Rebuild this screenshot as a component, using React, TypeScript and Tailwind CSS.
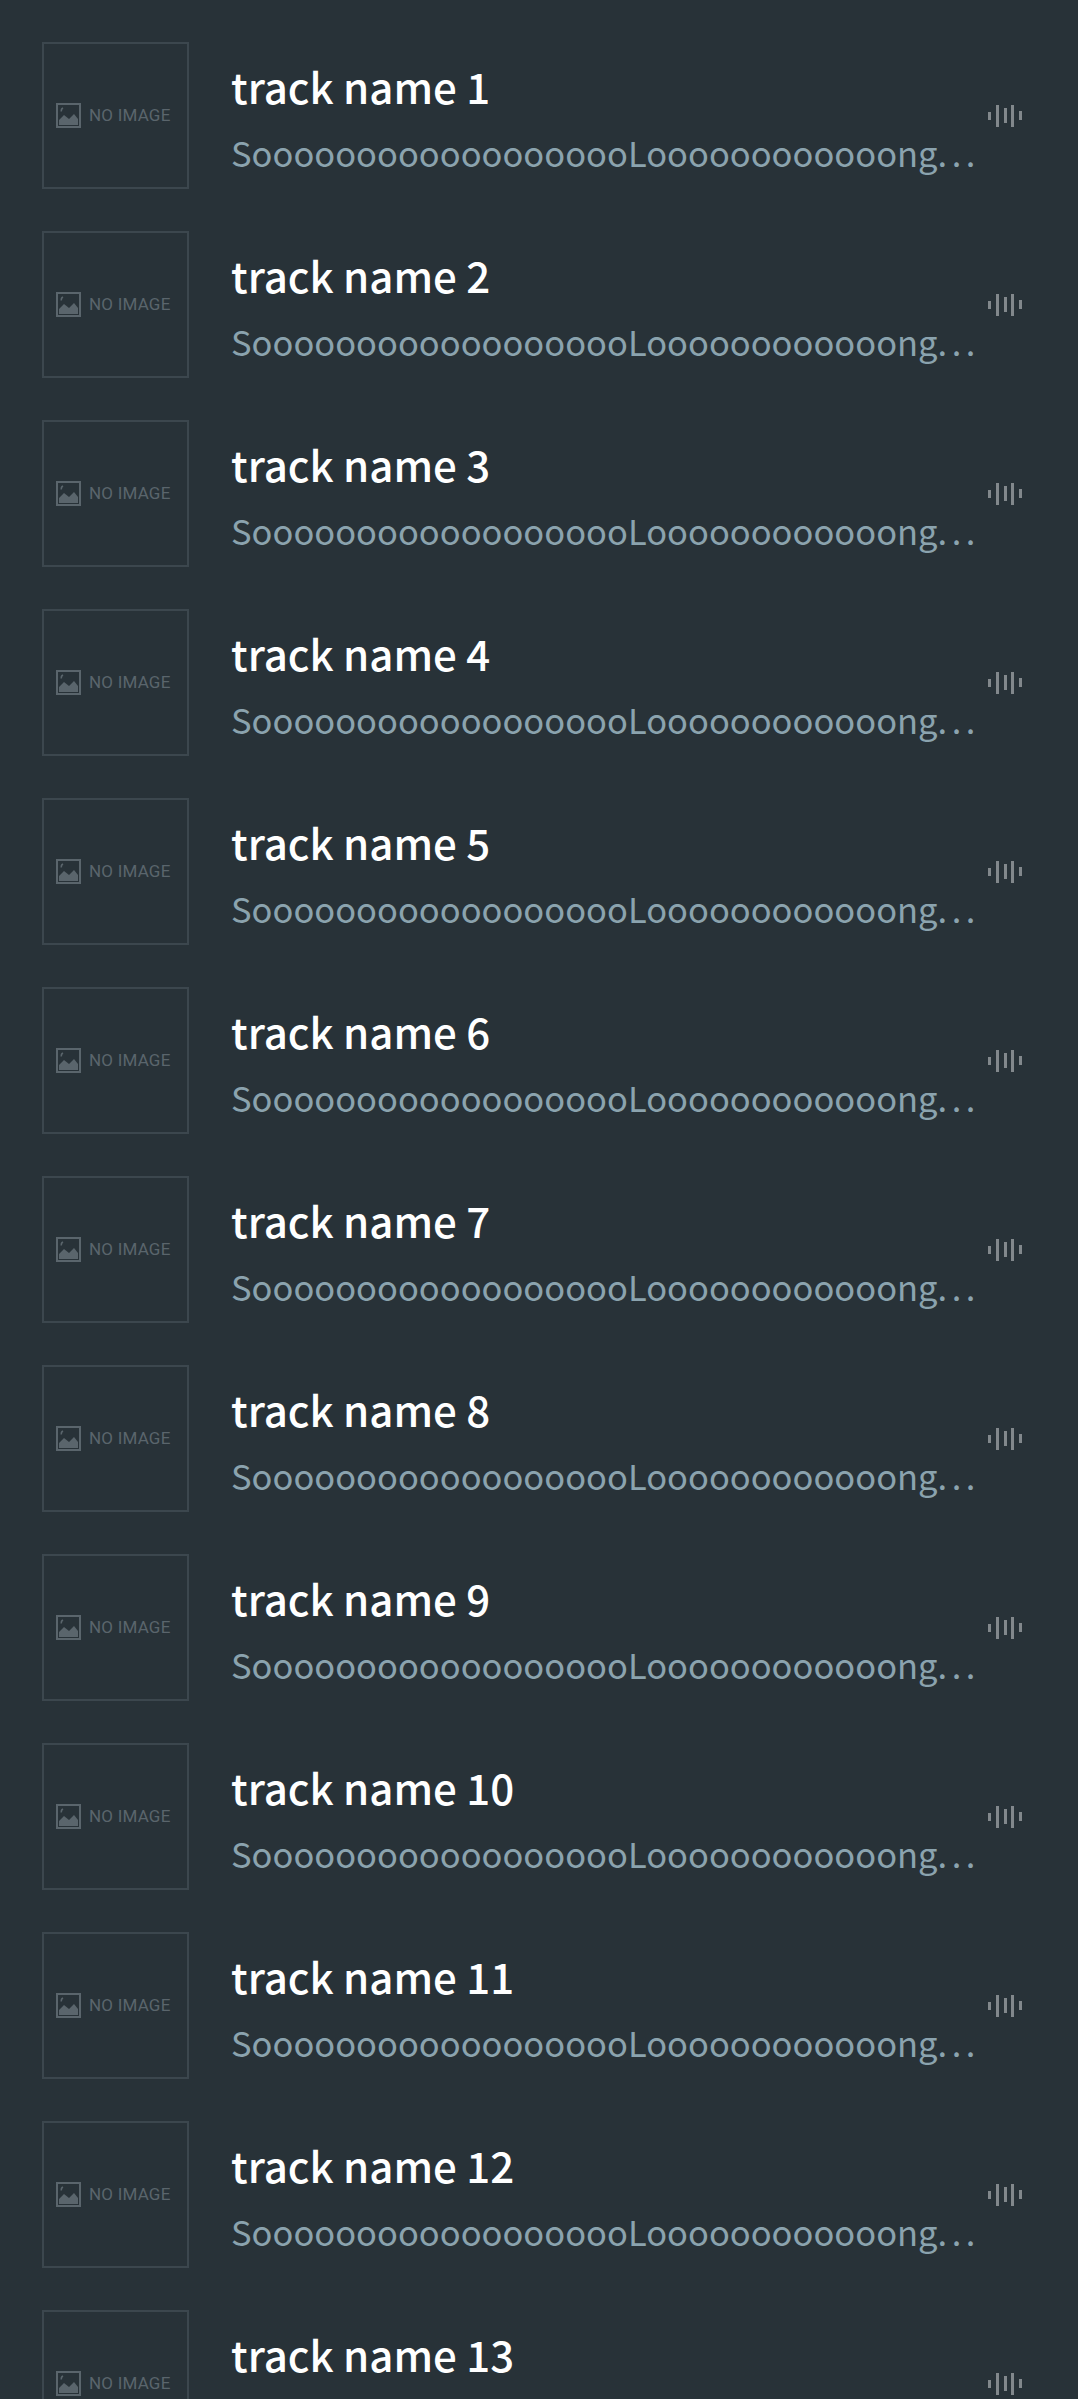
const tracks = Array.from({ length: 13 }, (_, i) => `track name ${i + 1}`);

function NoImage() {
  return (
    <div className="flex h-[147px] w-[147px] shrink-0 items-center gap-[8px] border-2 border-[#3c474e] pl-[12px]">
      <svg width="25" height="25" viewBox="0 0 25 25" className="shrink-0">
        <rect x="1" y="1" width="23" height="23" fill="none" stroke="#5a656c" strokeWidth="2" />
        <path d="M3 22v-5l5-5 5 4 5-5 4 5v6z" fill="#5a656c" />
        <path d="M7 5c-1.500.8-2 2-1.600 3.500" fill="none" stroke="#5a656c" strokeWidth="1.500" />
      </svg>
      <span className="font-['Roboto',sans-serif] text-[17px] leading-none tracking-[0.2px] whitespace-nowrap text-[#5a656c]">NO IMAGE</span>
    </div>
  );
}

function WaveIcon() {
  return (
    <div className="flex h-[22px] w-[34px] shrink-0 items-center justify-between">
      <span className="h-[8px] w-[3px] bg-[#82888c]" />
      <span className="h-[22px] w-[3px] bg-[#82888c]" />
      <span className="h-[15px] w-[3px] bg-[#82888c]" />
      <span className="h-[22px] w-[3px] bg-[#82888c]" />
      <span className="h-[9px] w-[3px] bg-[#82888c]" />
    </div>
  );
}

function TrackRow({ name }: { name: string }) {
  return (
    <div className="flex h-[189px] items-center pl-[42px] pr-[56px]">
      <NoImage />
      <div className="ml-[42px] min-w-0 flex-1 pt-[8px]">
        <div className="truncate text-[42px] leading-[66px] font-medium text-white">{name}</div>
        <div className="text-[34.5px] leading-[67px] whitespace-nowrap text-[#8ba3ae]">
          SooooooooooooooooooLoooooooooooong<span className="tracking-[4.5px]">...</span>
        </div>
      </div>
      <WaveIcon />
    </div>
  );
}

export default function App() {
  return (
    <div className="h-[2399px] overflow-hidden bg-[#283238] pt-[21px] font-['Noto_Sans_CJK_JP',sans-serif]">
      {tracks.map((name) => (
        <TrackRow key={name} name={name} />
      ))}
    </div>
  );
}
